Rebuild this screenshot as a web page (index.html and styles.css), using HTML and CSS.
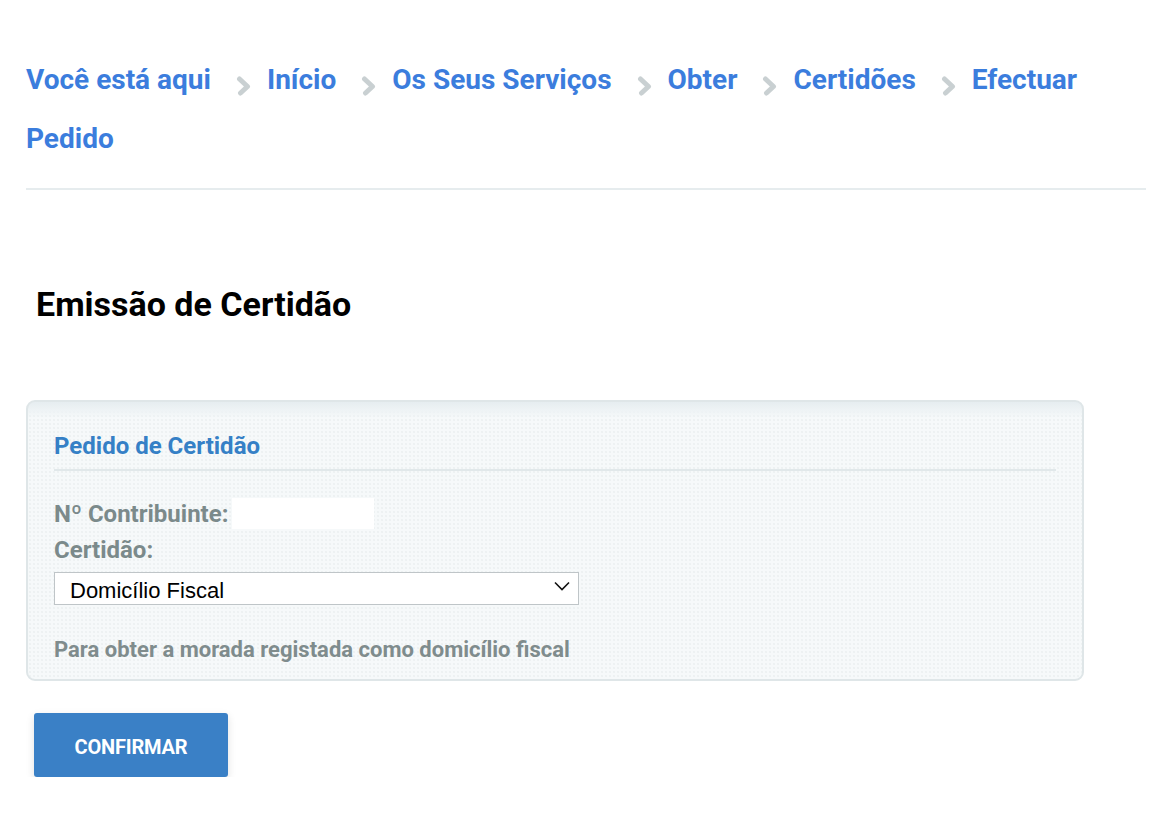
FILE: index.html
```html
<!DOCTYPE html>
<html>
<head>
  <title>Emissão de Certidão</title>
  <link rel="stylesheet" href="styles.css">
</head>
<body>
  <div class="page">
    <div class="breadcrumb">
      <a href="#" class="crumb">Você está aqui</a><span class="sep"><svg width="15" height="20" viewBox="0 0 15 20"><path d="M3.5 3 L11.5 10.5 L4.5 17" fill="none" stroke="#c9d0d2" stroke-width="5" stroke-linejoin="round" stroke-linecap="round"/></svg></span><a href="#" class="crumb">Início</a><span class="sep"><svg width="15" height="20" viewBox="0 0 15 20"><path d="M3.5 3 L11.5 10.5 L4.5 17" fill="none" stroke="#c9d0d2" stroke-width="5" stroke-linejoin="round" stroke-linecap="round"/></svg></span><a href="#" class="crumb">Os Seus Serviços</a><span class="sep"><svg width="15" height="20" viewBox="0 0 15 20"><path d="M3.5 3 L11.5 10.5 L4.5 17" fill="none" stroke="#c9d0d2" stroke-width="5" stroke-linejoin="round" stroke-linecap="round"/></svg></span><a href="#" class="crumb">Obter</a><span class="sep"><svg width="15" height="20" viewBox="0 0 15 20"><path d="M3.5 3 L11.5 10.5 L4.5 17" fill="none" stroke="#c9d0d2" stroke-width="5" stroke-linejoin="round" stroke-linecap="round"/></svg></span><a href="#" class="crumb">Certidões</a><span class="sep"><svg width="15" height="20" viewBox="0 0 15 20"><path d="M3.5 3 L11.5 10.5 L4.5 17" fill="none" stroke="#c9d0d2" stroke-width="5" stroke-linejoin="round" stroke-linecap="round"/></svg></span><a href="#" class="crumb"><span>Efectuar</span> <span>Pedido</span></a>
    </div>

    <h1 class="titulo">Emissão de Certidão</h1>

    <div class="painel">
      <div class="painel-titulo">Pedido de Certidão</div>

      <div class="linha">
        <span class="rotulo">Nº Contribuinte:</span>
        <span class="campo-nif"></span>
      </div>
      <div class="rotulo certidao">Certidão:</div>
      <div class="select">
        <span>Domicílio Fiscal</span>
        <svg width="16" height="10" viewBox="0 0 16 10"><path d="M1 1.5 L8 8.5 L15 1.5" fill="none" stroke="#111" stroke-width="1.6"/></svg>
      </div>
      <div class="ajuda">Para obter a morada registada como domicílio fiscal</div>
    </div>

    <button class="confirmar">CONFIRMAR</button>
  </div>
</body>
</html>
```
FILE: styles.css
```css
body {
  margin: 0;
  font-family: Roboto, "Liberation Sans", Arial, sans-serif;
  background: #fff;
}

.page {
  padding: 0 20px 0 26px;
}

.breadcrumb {
  padding-top: 50px;
  line-height: 59px;
  font-size: 28px;
  font-weight: bold;
  padding-bottom: 20px;
  border-bottom: 2px solid #e6ecee;
}

.crumb {
  color: #3b7ddd;
  text-decoration: none;
}

.sep {
  display: inline-block;
  margin: 0 16px 0 25px;
  vertical-align: -7px;
  line-height: 0;
}

.titulo {
  font-size: 34px;
  font-weight: bold;
  color: #000;
  margin: 94px 0 0 10px;
  line-height: 40px;
}

.painel {
  margin-top: 76px;
  width: 1058px;
  border: 2px solid #dfe6e8;
  border-radius: 9px;
  padding: 0 26px 17px 26px;
  box-sizing: border-box;
  background-color: #f6f9fa;
  background-image:
    linear-gradient(#e6edf0 0, #eef3f5 8px, rgba(246, 249, 250, 0) 16px),
    radial-gradient(#edf1f2 0.7px, transparent 0.9px);
  background-size: 100% 100%, 4px 4px;
  background-repeat: no-repeat, repeat;
}

.painel-titulo {
  padding-top: 31px;
  padding-bottom: 10px;
  line-height: 26px;
  font-size: 24px;
  font-weight: bold;
  color: #3580c6;
  border-bottom: 2px solid #e1e8ea;
}

.linha {
  display: flex;
  align-items: center;
  margin-top: 27px;
}

.rotulo {
  font-size: 24px;
  font-weight: bold;
  color: #7b8a8b;
  line-height: 24px;
}

.campo-nif {
  display: inline-block;
  width: 142px;
  height: 31px;
  background: #fff;
  margin-left: 4px;
}

.certidao {
  margin-top: 9px;
}

.select {
  margin-top: 10px;
  width: 525px;
  height: 33px;
  box-sizing: border-box;
  border: 1.5px solid #bfc5c8;
  background: #fff;
  display: flex;
  align-items: flex-end;
  justify-content: space-between;
  padding: 0 8px 0 15px;
  font-family: "Liberation Sans", Arial, sans-serif;
  font-size: 22px;
  line-height: 26px;
  color: #000;
}

.select svg {
  align-self: center;
  margin-top: -6px;
}

.ajuda {
  margin-top: 33px;
  font-size: 22px;
  font-weight: bold;
  color: #7f8c8d;
  line-height: 24px;
}

.confirmar {
  margin: 32px 0 0 8px;
  width: 194px;
  height: 64px;
  padding-top: 4px;
  border: none;
  border-radius: 3px;
  background: #3a80c6;
  color: #fff;
  font-family: Roboto, "Liberation Sans", sans-serif;
  font-size: 20px;
  font-weight: bold;
  letter-spacing: -0.2px;
  box-shadow: 0 3px 8px rgba(0, 0, 0, 0.12);
}
```
